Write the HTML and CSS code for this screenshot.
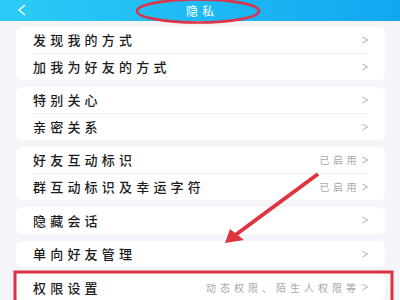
FILE: index.html
```html
<!DOCTYPE html>
<html lang="zh-CN">
<head>
  <meta charset="UTF-8">
  <meta name="viewport" content="width=device-width, initial-scale=1">
  <title>隐私</title>
  <link rel="stylesheet" href="styles.css">
</head>
<body>

  <div class="header">
    <svg class="back" width="10" height="12" viewBox="0 0 10 12">
      <polyline points="8,1 2,6 8,11" fill="none" stroke="#fff" stroke-width="1.4"/>
    </svg>
    <span class="title">隐私</span>
  </div>

  <div class="list">
    <div class="card">
      <div class="row"><span class="label">发现我的方式</span><span class="chev"></span></div>
      <div class="row"><span class="label">加我为好友的方式</span><span class="chev"></span></div>
    </div>
    <div class="card">
      <div class="row"><span class="label">特别关心</span><span class="chev"></span></div>
      <div class="row"><span class="label">亲密关系</span><span class="chev"></span></div>
    </div>
    <div class="card">
      <div class="row"><span class="label">好友互动标识</span><span class="value">已启用</span><span class="chev"></span></div>
      <div class="row"><span class="label">群互动标识及幸运字符</span><span class="value">已启用</span><span class="chev"></span></div>
    </div>
    <div class="card">
      <div class="row"><span class="label">隐藏会话</span><span class="chev"></span></div>
    </div>
    <div class="card">
      <div class="row"><span class="label">单向好友管理</span><span class="chev"></span></div>
    </div>
    <div class="card">
      <div class="row"><span class="label">权限设置</span><span class="value wide">动态权限、陌生人权限等</span><span class="chev"></span></div>
    </div>
  </div>

  <!-- annotation marks drawn over the screenshot -->
  <svg class="marks" width="400" height="300" viewBox="0 0 400 300">
    <ellipse cx="198" cy="11" rx="61" ry="11.5" fill="none" stroke="#dc3448" stroke-width="2.6"/>
    <rect x="15" y="272" width="377" height="30" fill="none" stroke="#dc3140" stroke-width="3"/>
    <line x1="318" y1="174" x2="234" y2="236" stroke="#de3440" stroke-width="4"/>
    <polygon points="225,243 230,229 244,240" fill="#de3440"/>
  </svg>

</body>
</html>
```

FILE: styles.css
```css
body {
  margin: 0;
  background: #f4f5f9;
  font-family: "Noto Sans CJK SC", "Noto Sans", sans-serif;
  width: 400px;
  height: 300px;
  overflow: hidden;
  position: relative;
}
.header {
  height: 21px;
  background: linear-gradient(90deg, #2bcbf6, #12a7f1);
  display: flex;
  align-items: center;
  justify-content: center;
  position: relative;
}
.back {
  position: absolute;
  left: 17px;
  top: 4px;
}
.title {
  color: #fff;
  font-size: 12px;
  letter-spacing: 4px;
  margin-left: 4px;
}
.list {
  padding: 6px 15px 0 16px;
  display: flex;
  flex-direction: column;
  gap: 7px;
}
.card {
  background: #fff;
  border-radius: 6px;
  padding: 0 17px;
}
.row {
  height: 26.5px;
  display: flex;
  align-items: center;
  border-bottom: 1px solid #f0f0f2;
  box-sizing: border-box;
}
.row:last-child {
  border-bottom: none;
}
.label {
  flex: 1;
  font-size: 13px;
  font-weight: 500;
  letter-spacing: 4.2px;
  color: #1c1c1c;
}
.value {
  font-size: 10px;
  letter-spacing: 3.5px;
  color: #a8a8a8;
  margin-right: 2px;
}
.value.wide {
  letter-spacing: 4px;
}
.chev {
  width: 6px;
  height: 8px;
  position: relative;
}
.chev::before,
.chev::after {
  content: "";
  position: absolute;
  left: 0;
  width: 6px;
  height: 1px;
  background: #b0b0b0;
}
.chev::before {
  top: 2px;
  transform: rotate(33deg);
}
.chev::after {
  top: 5px;
  transform: rotate(-33deg);
}
.marks {
  position: absolute;
  left: 0;
  top: 0;
  pointer-events: none;
}
```
